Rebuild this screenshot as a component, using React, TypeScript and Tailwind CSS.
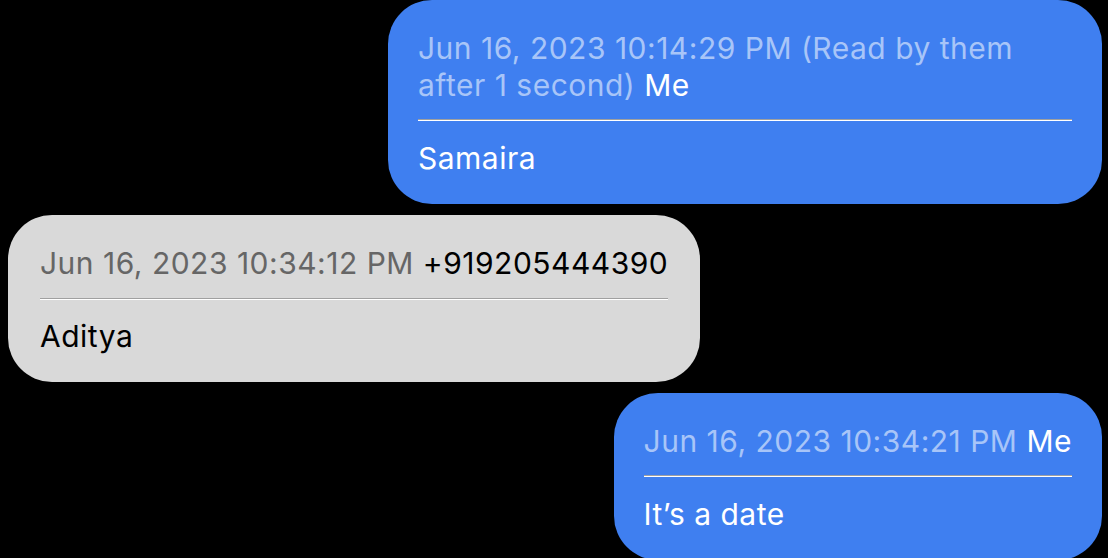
import React from "react";

type Msg = {
  me: boolean;
  time: React.ReactNode;
  sender: string;
  text: string;
  wide?: boolean;
};

const msgs: Msg[] = [
  {
    me: true,
    wide: true,
    time: (
      <>
        Jun 16, 2023 10:14:29 PM (Read by them
        <br />
        after 1 second)
      </>
    ),
    sender: "Me",
    text: "Samaira",
  },
  {
    me: false,
    time: "Jun 16, 2023 10:34:12 PM",
    sender: "+919205444390",
    text: "Aditya",
  },
  {
    me: true,
    time: "Jun 16, 2023 10:34:21 PM",
    sender: "Me",
    text: "It\u2019s a date",
  },
];

export default function App() {
  return (
    <div
      className="w-[1108px] h-[558px] overflow-hidden bg-black pl-[8px] pr-[6px] flex flex-col gap-[11px]"
      style={{ fontFamily: "Inter, 'Noto Sans', sans-serif" }}
    >
      {msgs.map((m, i) =>
        m.me ? (
          <div key={i} className="flex justify-end shrink-0">
            <div
              className={
                m.wide
                  ? "w-[714px] rounded-[44px] bg-[#3f7ff0] px-[30px] pt-[30px] pb-[27px] text-[30px] leading-[37px] tracking-[0.5px] text-white"
                  : "max-w-[714px] rounded-[44px] bg-[#3f7ff0] px-[30px] pt-[30px] pb-[27px] text-[30px] leading-[37px] tracking-[0.5px] text-white"
              }
            >
              <div>
                <span className="text-[#a8c5f8]">{m.time}</span>{" "}
                <span className="text-white">{m.sender}</span>
              </div>
              <div className="mt-[15px] mb-[19px] border-t border-t-[#a0a0a0] border-b border-b-white" />
              <div>{m.text}</div>
            </div>
          </div>
        ) : (
          <div key={i} className="flex justify-start shrink-0">
            <div className="max-w-[714px] rounded-[44px] bg-[#d9d9d9] px-[32px] pt-[30px] pb-[27px] text-[30px] leading-[37px] tracking-[0.5px] text-black">
              <div>
                <span className="text-[#666666]">{m.time}</span>{" "}
                <span className="text-black">{m.sender}</span>
              </div>
              <div className="mt-[16px] mb-[18px] border-t border-t-[#a0a0a0] border-b border-b-white" />
              <div>{m.text}</div>
            </div>
          </div>
        )
      )}
    </div>
  );
}
